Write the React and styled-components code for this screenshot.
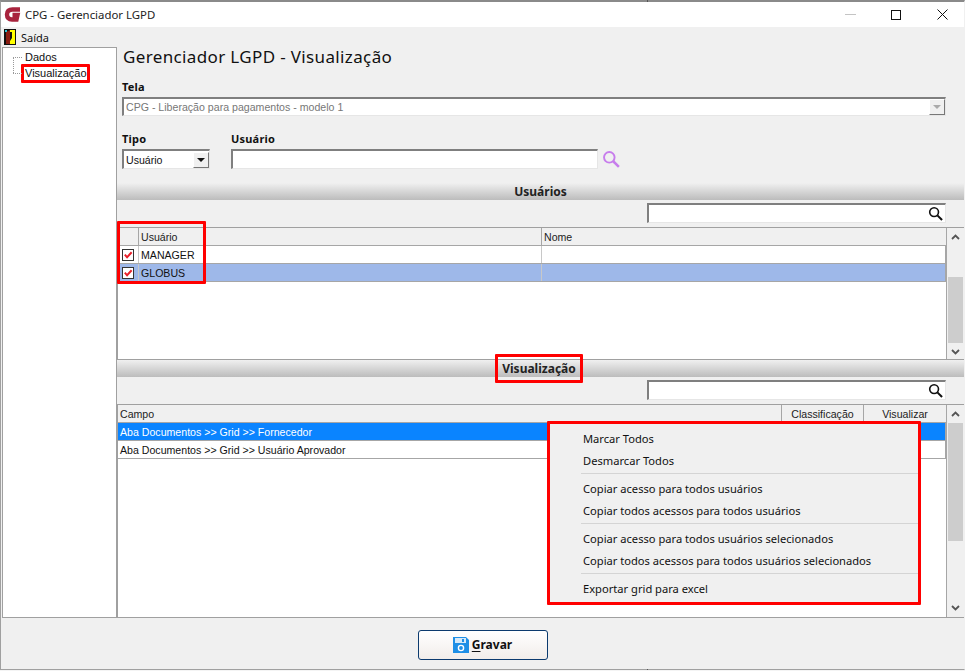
import styled, { createGlobalStyle } from 'styled-components';

const Global = createGlobalStyle`
  * { box-sizing: border-box; }
  html, body { margin: 0; padding: 0; background: #f4f4f4; }
  body { font-family: "Liberation Sans", "Noto Sans", sans-serif; font-size: 10.6px; color: #111; }
`;

const Window = styled.div`
  position: relative;
  width: 965px;
  height: 670px;
  display: flex;
  flex-direction: column;
  background: #f0f0f0;
  border-top: 2px solid #8a8a8a;
  border-left: 1px solid #a0a0a0;
  border-right: 1px solid transparent;
  border-bottom: 1px solid #a0a0a0;

  /* seam of the window behind, shows on both edges */
  &::before, &::after {
    content: '';
    position: absolute;
    left: 646px;
    width: 1px;
    height: 2px;
    background: #555;
  }
  &::before { top: -2px; }
  &::after { bottom: -2px; }
`;

const TitleBar = styled.div`
  height: 25px;
  flex: none;
  display: flex;
  align-items: center;
  background: #fff;
  padding-left: 3px;
`;

const AppTitle = styled.span`
  margin-left: 3px;
  font-family: "Noto Sans", sans-serif;
  font-size: 11.4px;
  flex: 1;
  color: #222;
`;

const WinControls = styled.div`
  display: flex;
  align-items: center;
  margin-right: -1px;
`;

const WinButton = styled.div`
  width: 46px;
  height: 25px;
  display: flex;
  align-items: center;
  justify-content: center;
`;

const MenuBar = styled.div`
  height: 19px;
  flex: none;
  display: flex;
  align-items: center;
  gap: 5px;
  padding: 1px 0 0 3px;
  font-family: "Noto Sans", sans-serif;
  font-size: 11px;
`;

const Body = styled.div`
  flex: 1;
  min-height: 0;
  display: flex;
`;

const TreePanel = styled.div`
  width: 115px;
  flex: none;
  margin: 1px 0 0 1px;
  background: #fff;
  border: 1px solid #a0a0a0;
  padding: 1px 0 0 10px;
`;

const TreeNode = styled.div`
  position: relative;
  height: 16px;
  display: flex;
  align-items: center;
  padding-left: 12px;
  font-size: 11px;

  &::before {
    content: '';
    position: absolute;
    left: 0;
    top: 8px;
    width: 9px;
    border-top: 1px dotted #999;
  }

  &:last-child::after {
    content: '';
    position: absolute;
    left: 0;
    top: -8px;
    height: 16px;
    border-left: 1px dotted #999;
  }
`;

const TreeMark = styled.span`
  border: 3px solid #f00;
  border-radius: 1px;
  margin-left: -4px;
  padding: 0 1px;
  height: 19px;
  width: 69px;
  flex: none;
  display: flex;
  align-items: center;
  white-space: nowrap;
`;

const Main = styled.div`
  flex: 1;
  min-width: 0;
  display: flex;
  flex-direction: column;
`;

const Heading = styled.h1`
  margin: 0;
  height: 24px;
  padding-left: 6px;
  font-family: "Noto Sans", sans-serif;
  font-size: 17px;
  font-weight: 400;
  letter-spacing: 0.36px;
  line-height: 22px;
  color: #111;
`;

const Form = styled.div`
  padding: 9px 18px 0 5px;
  display: flex;
  flex-direction: column;
`;

const Label = styled.label`
  display: block;
  height: 18px;
  font-family: "Noto Sans", sans-serif;
  font-weight: 700;
  font-size: 11px;
  line-height: 15px;
  letter-spacing: 0.2px;
`;

const Sunken = styled.div`
  height: 20px;
  display: flex;
  align-items: center;
  background: #fff;
  border-style: solid;
  border-width: 2px 1px 1px 2px;
  border-color: #7f7f7f #e6e6e6 #e6e6e6 #7f7f7f;
  padding-left: 2px;
  color: ${p => (p.$disabled ? '#777' : '#111')};
  width: ${p => p.$width || 'auto'};
  flex: ${p => (p.$width ? 'none' : '1')};
`;

const SelectText = styled.span`
  flex: 1;
  white-space: nowrap;
  overflow: hidden;
`;

const Arrow = styled.span`
  width: 16px;
  height: 16px;
  flex: none;
  display: flex;
  align-items: center;
  justify-content: center;
  background: #f0f0f0;
  border-style: solid;
  border-width: 1px;
  border-color: #fff #777 #777 #fff;

  &::after {
    content: '';
    border-style: solid;
    border-width: 4px 4px 0 4px;
    border-color: ${p => (p.$disabled ? '#aaa' : '#111')} transparent transparent transparent;
  }
`;

const FieldRow = styled.div`
  margin-top: 15px;
  display: flex;
  align-items: flex-start;
  gap: 21px;
`;

const Field = styled.div`
  display: flex;
  flex-direction: column;
`;

const InputLine = styled.div`
  display: flex;
  align-items: center;
  gap: 4px;
`;

const SectionBar = styled.div`
  flex: none;
  height: 17px;
  margin-top: ${p => p.$top || 0}px;
  display: flex;
  align-items: center;
  justify-content: center;
  background: linear-gradient(#f0f0f0, #bcbcbc);
  font-family: "Noto Sans", sans-serif;
  font-size: 12px;
  font-weight: 700;
  color: #222;
`;

const SectionMark = styled.span`
  position: relative;
  z-index: 2;
  border: 3px solid #f00;
  border-radius: 1px;
  height: 29px;
  width: 88px;
  flex: none;
  display: flex;
  align-items: center;
  justify-content: center;
  margin-right: 3px;
`;

const SearchRow = styled.div`
  flex: none;
  display: flex;
  justify-content: flex-end;
  padding: 3px 18px 4px 0;
`;

const SearchBox = styled(Sunken)`
  width: 299px;
  flex: none;
  justify-content: flex-end;
  padding-right: 2px;
`;

const Grid = styled.div`
  position: relative;
  flex: ${p => (p.$grow ? '1' : 'none')};
  height: ${p => (p.$grow ? 'auto' : '133px')};
  min-height: 0;
  display: flex;
  background: #fff;
  border: 1px solid #a0a0a0;
  border-right: 0;
`;

const GridBody = styled.div`
  flex: 1;
  min-width: 0;
  display: flex;
  flex-direction: column;
`;

const Row = styled.div`
  height: 18px;
  flex: none;
  display: grid;
  grid-template-columns: ${p => p.$cols};
  align-items: stretch;
  background: ${p => p.$bg || '#fff'};
  color: ${p => p.$color || '#111'};
  border-bottom: 1px solid #a6a6a6;
  border-right: 1px solid #a6a6a6;
`;

const HeadRow = styled(Row)`
  background: #f0f0f0;
  border-right: 0;
`;

const Cell = styled.div`
  display: flex;
  align-items: center;
  justify-content: ${p => (p.$center ? 'center' : 'flex-start')};
  padding-left: ${p => (p.$center ? 0 : 2)}px;
  border-left: ${p => (p.$first ? '0' : '1px solid #c8c8c8')};
  white-space: nowrap;
  overflow: hidden;
`;

const HeadCell = styled(Cell)`
  border-left-color: #a6a6a6;
  color: #222;
`;

const ScrollBar = styled.div`
  width: 18px;
  flex: none;
  display: flex;
  flex-direction: column;
  align-items: center;
  background: #f0f0f0;
  border-left: 1px solid #a6a6a6;
`;

const ScrollArrow = styled.div`
  height: 18px;
  flex: none;
  display: flex;
  align-items: center;
  justify-content: center;
`;

const ScrollSpace = styled.div`
  flex: 1;
  width: 100%;
  padding: ${p => p.$before}px 1px 0 1px;
`;

const Thumb = styled.div`
  height: ${p => p.$height}px;
  background: #cdcdcd;
`;

const UserMark = styled.div`
  position: absolute;
  left: -1px;
  top: -7px;
  width: 89px;
  height: 63px;
  border: 3px solid #f00;
  border-radius: 1px;
`;

const Check = styled.span`
  width: 12px;
  height: 12px;
  background: #fff;
  border: 1px solid #333;
  display: flex;
  align-items: center;
  justify-content: center;
`;

const ContextMenu = styled.div`
  position: absolute;
  left: 429px;
  top: 16px;
  width: 374px;
  height: 184px;
  background: #f0f0f0;
  border: 3px solid #f00;
  border-radius: 1px;
  display: flex;
  flex-direction: column;
  padding: 3px 0 0 31px;
`;

const MenuItem = styled.div`
  height: 22px;
  flex: none;
  display: flex;
  align-items: center;
  padding-left: 2px;
  font-family: "Noto Sans", sans-serif;
  font-size: 11.15px;
  color: #111;
`;

const MenuSep = styled.div`
  height: 1px;
  flex: none;
  margin: 2px 0 3px;
  background: #d4d4d4;
`;

const Footer = styled.div`
  height: 51px;
  flex: none;
  display: flex;
  align-items: center;
  justify-content: center;
  padding-top: 2px;
`;

const SaveButton = styled.button`
  width: 130px;
  height: 30px;
  display: flex;
  align-items: center;
  justify-content: center;
  gap: 3px;
  padding: 0;
  border: 1px solid #0b3a6e;
  border-radius: 3px;
  background: linear-gradient(#ffffff, #f1edea);
  font-family: "Noto Sans", sans-serif;
  font-size: 12px;
  font-weight: 700;
  color: #111;

  u { text-underline-offset: 2px; }
`;

const Logo = () => (
  <svg width="18" height="17" viewBox="0 0 18 17">
    <path d="M16 3.5 H8.5 Q3 3.5 3 8.5 Q3 13.5 8 13.5 H12.5 L13.5 9 H8.5" fill="none" stroke="#a8233d" strokeWidth="4.4" />
  </svg>
);

const ExitIcon = () => (
  <svg width="12" height="16" viewBox="0 0 12 16">
    <rect width="12" height="16" fill="#111" />
    <rect x="6" y="1" width="5" height="14" fill="#ff0" />
    <path d="M2 3 L6 1 V15 H2 Z" fill="#8a1c12" />
    <path d="M6 3 L8 3 L8 9 L6 12 Z" fill="#111" />
    <rect x="1" y="1" width="2" height="2" fill="#30c8d8" />
  </svg>
);

const Magnifier = ({ color = '#111', size = 15 }) => (
  <svg width={size} height={size} viewBox="0 0 16 16">
    <circle cx="6.5" cy="6.5" r="4.7" fill="none" stroke={color} strokeWidth="1.7" />
    <path d="M10 10 L15 15" stroke={color} strokeWidth="2.2" />
  </svg>
);

const ChevronGlyph = ({ down }) => (
  <svg width="9" height="6" viewBox="0 0 9 6">
    <path d={down ? 'M1 1 L4.5 4.5 L8 1' : 'M1 5 L4.5 1.5 L8 5'} fill="none" stroke="#555" strokeWidth="1.8" />
  </svg>
);

const CheckMark = () => (
  <svg width="10" height="10" viewBox="0 0 11 11">
    <path d="M2 5 L4.5 8 L9.5 2.5" fill="none" stroke="#e8202a" strokeWidth="2.2" />
  </svg>
);

const Floppy = () => (
  <svg width="16" height="16" viewBox="0 0 16 16">
    <path d="M0 0 H13 L16 3 V16 H0 Z" fill="#1e8fe6" />
    <rect x="2" y="1" width="11" height="5" fill="#d6e9f8" />
    <rect x="9" y="2" width="2" height="3" fill="#1e8fe6" />
    <circle cx="8" cy="11" r="2.6" fill="none" stroke="#fff" strokeWidth="1.4" />
  </svg>
);

const Scroll = ({ before, thumb }) => (
  <ScrollBar>
    <ScrollArrow><ChevronGlyph /></ScrollArrow>
    <ScrollSpace $before={before}><Thumb $height={thumb} /></ScrollSpace>
    <ScrollArrow><ChevronGlyph down /></ScrollArrow>
  </ScrollBar>
);

const userCols = '20px 403px 1fr';
const fieldCols = '1fr 82px 83px';

const App = () => {
  return (
    <>
      <Global />
      <Window>
        <TitleBar>
          <Logo />
          <AppTitle>CPG - Gerenciador LGPD</AppTitle>
          <WinControls>
            <WinButton>
              <svg width="11" height="1" viewBox="0 0 11 1"><rect width="11" height="1" fill="#c4c4c4" /></svg>
            </WinButton>
            <WinButton>
              <svg width="10" height="10" viewBox="0 0 10 10"><rect x=".5" y=".5" width="9" height="9" fill="none" stroke="#111" /></svg>
            </WinButton>
            <WinButton>
              <svg width="11" height="11" viewBox="0 0 11 11"><path d="M.5 .5 L10.5 10.5 M10.5 .5 L.5 10.5" stroke="#111" /></svg>
            </WinButton>
          </WinControls>
        </TitleBar>
        <MenuBar><ExitIcon />Saída</MenuBar>
        <Body>
          <TreePanel>
            <TreeNode>Dados</TreeNode>
            <TreeNode><TreeMark>Visualização</TreeMark></TreeNode>
          </TreePanel>
          <Main>
            <Heading>Gerenciador LGPD - Visualização</Heading>
            <Form>
              <Label>Tela</Label>
              <Sunken $disabled>
                <SelectText>CPG - Liberação para pagamentos - modelo 1</SelectText>
                <Arrow $disabled />
              </Sunken>
              <FieldRow>
                <Field>
                  <Label>Tipo</Label>
                  <Sunken $width="88px">
                    <SelectText>Usuário</SelectText>
                    <Arrow />
                  </Sunken>
                </Field>
                <Field>
                  <Label>Usuário</Label>
                  <InputLine>
                    <Sunken $width="367px" />
                    <Magnifier color="#c77dec" size={18} />
                  </InputLine>
                </Field>
              </FieldRow>
            </Form>
            <SectionBar $top={14}>Usuários</SectionBar>
            <SearchRow>
              <SearchBox><Magnifier /></SearchBox>
            </SearchRow>
            <Grid>
              <GridBody>
                <HeadRow $cols={userCols}>
                  <HeadCell $first />
                  <HeadCell>Usuário</HeadCell>
                  <HeadCell>Nome</HeadCell>
                </HeadRow>
                <Row $cols={userCols}>
                  <Cell $first $center><Check><CheckMark /></Check></Cell>
                  <Cell>MANAGER</Cell>
                  <Cell />
                </Row>
                <Row $cols={userCols} $bg="#9eb8e9">
                  <Cell $first $center><Check><CheckMark /></Check></Cell>
                  <Cell>GLOBUS</Cell>
                  <Cell />
                </Row>
              </GridBody>
              <Scroll before={31} thumb={66} />
              <UserMark />
            </Grid>
            <SectionBar>
              <SectionMark>Visualização</SectionMark>
            </SectionBar>
            <SearchRow>
              <SearchBox><Magnifier /></SearchBox>
            </SearchRow>
            <Grid $grow>
              <GridBody>
                <HeadRow $cols={fieldCols}>
                  <HeadCell $first>Campo</HeadCell>
                  <HeadCell $center>Classificação</HeadCell>
                  <HeadCell $center>Visualizar</HeadCell>
                </HeadRow>
                <Row $cols={fieldCols} $bg="#0a84ff" $color="#fff">
                  <Cell $first>Aba Documentos &gt;&gt; Grid &gt;&gt; Fornecedor</Cell>
                  <Cell />
                  <Cell />
                </Row>
                <Row $cols={fieldCols}>
                  <Cell $first>Aba Documentos &gt;&gt; Grid &gt;&gt; Usuário Aprovador</Cell>
                  <Cell />
                  <Cell />
                </Row>
              </GridBody>
              <Scroll before={0} thumb={118} />
              <ContextMenu>
                <MenuItem>Marcar Todos</MenuItem>
                <MenuItem>Desmarcar Todos</MenuItem>
                <MenuSep />
                <MenuItem>Copiar acesso para todos usuários</MenuItem>
                <MenuItem>Copiar todos acessos para todos usuários</MenuItem>
                <MenuSep />
                <MenuItem>Copiar acesso para todos usuários selecionados</MenuItem>
                <MenuItem>Copiar todos acessos para todos usuários selecionados</MenuItem>
                <MenuSep />
                <MenuItem>Exportar grid para excel</MenuItem>
              </ContextMenu>
            </Grid>
          </Main>
        </Body>
        <Footer>
          <SaveButton><Floppy /><span><u>G</u>ravar</span></SaveButton>
        </Footer>
      </Window>
    </>
  );
};

export default App;
